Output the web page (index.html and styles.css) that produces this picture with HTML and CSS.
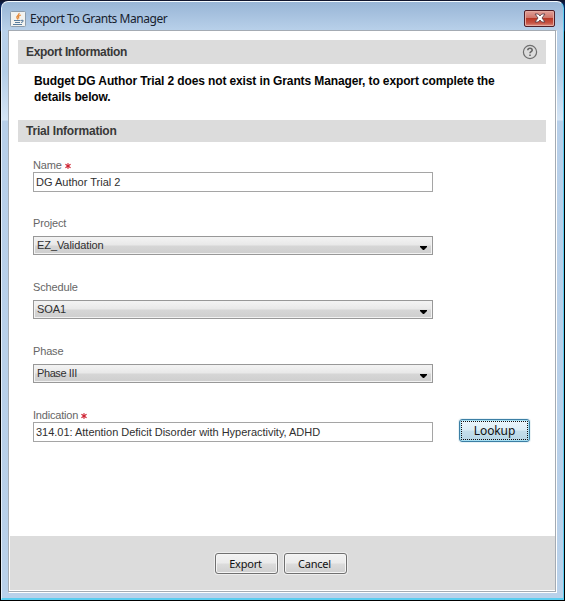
FILE: index.html
```html
<!DOCTYPE html>
<html lang="en">
<head>
<meta charset="utf-8">
<title>Export To Grants Manager</title>
<link rel="stylesheet" href="styles.css">
</head>
<body>
<div class="window">
  <header class="titlebar">
    <svg class="java" width="16" height="16" viewBox="0 0 16 16">
      <rect x=".5" y=".5" width="15" height="15" rx="1" fill="#f3f3f0" stroke="#8d9cab"/>
      <path d="M9 2C10 4 5.500 5 7 7L8 8.500M11 4C8 5 8 6 9 7.500" fill="none" stroke="#e58a3a" stroke-width="1.300"/>
      <path d="M4 9.500H10.500M5 11.500H10M3 13.500H12M11 9.500C14 8.500 13.500 11 11 11.500" fill="none" stroke="#587c9d" stroke-width="1.100"/>
    </svg>
    <span class="caption">Export To Grants Manager</span>
    <button class="close" aria-label="Close">
      <svg width="12" height="10" viewBox="0 0 12 10"><path d="M1 1H4.200L6 3 7.800 1H11L8 5 11 9H7.800L6 7 4.200 9H1L4 5Z" fill="#fff" stroke="#62424a" stroke-width=".9"/></svg>
    </button>
  </header>
  <main class="panel">
    <div class="content">
      <h1 class="section section-top"><span>Export Information</span>
        <svg width="16" height="16" viewBox="0 0 16 16" fill="none"><circle cx="8" cy="8" r="6.600" stroke="#6e6e6e" stroke-width="1.200"/><path d="M5.800 6.300C5.800 3.500 10.200 3.500 10.200 6.200C10.200 7.600 8 7.700 8 9.300M8 10.400V12" stroke="#666" stroke-width="1.600"/></svg>
      </h1>
      <p class="message"><span>Budget DG Author Trial 2 does not exist in Grants Manager, to export complete the</span><br><span>details below.</span></p>
      <h2 class="section section-trial"><span>Trial Information</span></h2>
      <div class="form">
        <div class="field field-text"><div class="label"><span>Name</span><svg class="star" width="6" height="6" viewBox="0 0 7 7"><path d="M3.500 0V7M.5 1.500L6.500 5.500M6.500 1.500L.5 5.500" stroke="#cf2434" stroke-width="1.200"/></svg></div><div class="input"><span>DG Author Trial 2</span></div></div>
        <div class="field"><div class="label"><span>Project</span></div><div class="select"><span>EZ_Validation</span><i class="arrow"></i></div></div>
        <div class="field"><div class="label"><span>Schedule</span></div><div class="select"><span>SOA1</span><i class="arrow"></i></div></div>
        <div class="field"><div class="label"><span>Phase</span></div><div class="select"><span class="phase-value">Phase III</span><i class="arrow"></i></div></div>
        <div class="lookup-row">
          <div class="field field-text"><div class="label"><span class="indication-label">Indication</span><svg class="star" width="6" height="6" viewBox="0 0 7 7"><path d="M3.500 0V7M.5 1.500L6.500 5.500M6.500 1.500L.5 5.500" stroke="#cf2434" stroke-width="1.200"/></svg></div><div class="input"><span class="indication-value">314.01: Attention Deficit Disorder with Hyperactivity, ADHD</span></div></div>
          <button class="lookup"><span>Lookup</span></button>
        </div>
      </div>
    </div>
    <footer class="actions"><button class="btn"><span>Export</span></button><button class="btn"><span>Cancel</span></button></footer>
  </main>
</div>
</body>
</html>
```
FILE: styles.css
```css
* { box-sizing: border-box; }
html { background: linear-gradient(#111328 0, #07235b 5px, #08265d 30px, #000 32px); height: 100%; }
body { margin: 0; padding: 1px; height: 601px; overflow: hidden; font: 11px/13px "Liberation Sans", Arial, sans-serif; color: #303030; }
h1, h2, p { margin: 0; }
button { margin: 0; padding: 0; font: inherit; color: #111; }
svg { display: block; flex: none; }
span { white-space: nowrap; }
.window {
  height: 599px; padding: 0 6px 5px;
  border: 1px solid #5bcdf0; border-top-color: #f4faff; border-left-color: #e5effa; border-bottom-width: 2px;
  border-radius: 7px 7px 0 0;
  background: linear-gradient(#98b5d6 0, #b9d1ea 29px, #b4cee8 70px, #d5e5f5 118px, #b7cfe9 119px, #b9d1ea 100%);
}
.titlebar { height: 28px; display: flex; align-items: center; padding: 4px 2px 0 2px; }
.java { margin-top: 1px; }
.caption { font: 12px/16px "Noto Sans", "Open Sans", sans-serif; color: #17212e; margin: 2px 0 0 4px; letter-spacing: -.44px; }
.close { width: 31px; height: 17px; margin: 0 0 0 auto; display: flex; align-items: center; justify-content: center; border: 1px solid #501d27; border-radius: 2px; background: linear-gradient(#e2a099, #cf756a 46%, #b83624 48%, #c65344 80%, #df9184); box-shadow: inset 0 0 0 1px #e5aaa0; }
.panel { height: 563px; width: 549px; border: 1px solid #a4abb3; border-right: 1px solid #fff; border-bottom: 1px solid #fff; background: #fff; box-shadow: inset -1px -1px #a4abb3; padding: 0 2px 2px 1px; display: flex; flex-direction: column; }
.content { padding: 9px 8px 0; flex: 1; }
.section { width: 528px; background: #dcdcdc; display: flex; align-items: center; justify-content: space-between; padding: 0 8px; font: bold 12px/16px "Liberation Sans", Arial, sans-serif; color: #383838; }
.section-top { height: 24px; letter-spacing: -.35px; }
.section-trial { height: 22px; margin-top: 16px; letter-spacing: -.2px; }
.message { font: bold 12px/16px "Liberation Sans", Arial, sans-serif; color: #050505; padding: 9px 0 0 16px; height: 40px; letter-spacing: -.12px; }
.form { padding: 18px 0 0 15px; }
.field { width: 400px; height: 64px; }
.field-text { height: 58px; }
.label { height: 11px; line-height: 11px; display: flex; color: #666; letter-spacing: -.15px; }
.indication-label { letter-spacing: -.2px; }
.star { margin: 3px 0 0 3px; }
.input { height: 20px; margin-top: 1px; border: 1px solid #a5a5a5; background: #fff; line-height: 18px; padding-left: 2px; }
.indication-value { letter-spacing: -.02px; }
.select { height: 19px; margin-top: 7px; border: 1px solid #989898; box-shadow: inset 0 0 0 1px #f2f2f2; background: linear-gradient(#f4f4f4, #e8e8e8 48%, #d6d6d6 52%, #cecece); line-height: 16px; padding: 0 5px 0 3px; display: flex; justify-content: space-between; letter-spacing: -.08px; }
.phase-value { letter-spacing: -.4px; }
.arrow { width: 7px; height: 4px; margin-top: 9px; background: #000; clip-path: polygon(0 0, 100% 0, 100% 1px, 4px 100%, 3px 100%, 0 1px); }
.lookup-row { display: flex; }
.lookup { width: 71px; height: 23px; margin: 9px 0 0 26px; border: 1px solid #3c7fa5; border-radius: 3px; background: linear-gradient(#edf6fb, #dceef6 48%, #c4dfeb 52%, #b7d6e5); outline: 1px dotted #111; outline-offset: -3px; box-shadow: inset 0 0 0 1px #a7e0f3, 0 0 0 1px #e9f3f6; font: 12px/18px "Noto Sans", "Open Sans", sans-serif; letter-spacing: -.1px; }
.actions { height: 54px; width: 545px; background: #dcdcdc; display: flex; justify-content: center; align-items: flex-start; gap: 6px; padding-top: 17px; padding-right: 3px; }
.btn { width: 63px; height: 21px; padding-right: 2px; border: 1px solid #707070; border-radius: 3px; background: linear-gradient(#f2f2f2, #ebebeb 48%, #dcdcdc 52%, #cfcfcf); box-shadow: inset 0 0 0 1px #f5f5f5, 0 0 0 1px #ededed; font: 11px/17px "Noto Sans", "Open Sans", sans-serif; letter-spacing: -.2px; }
```
